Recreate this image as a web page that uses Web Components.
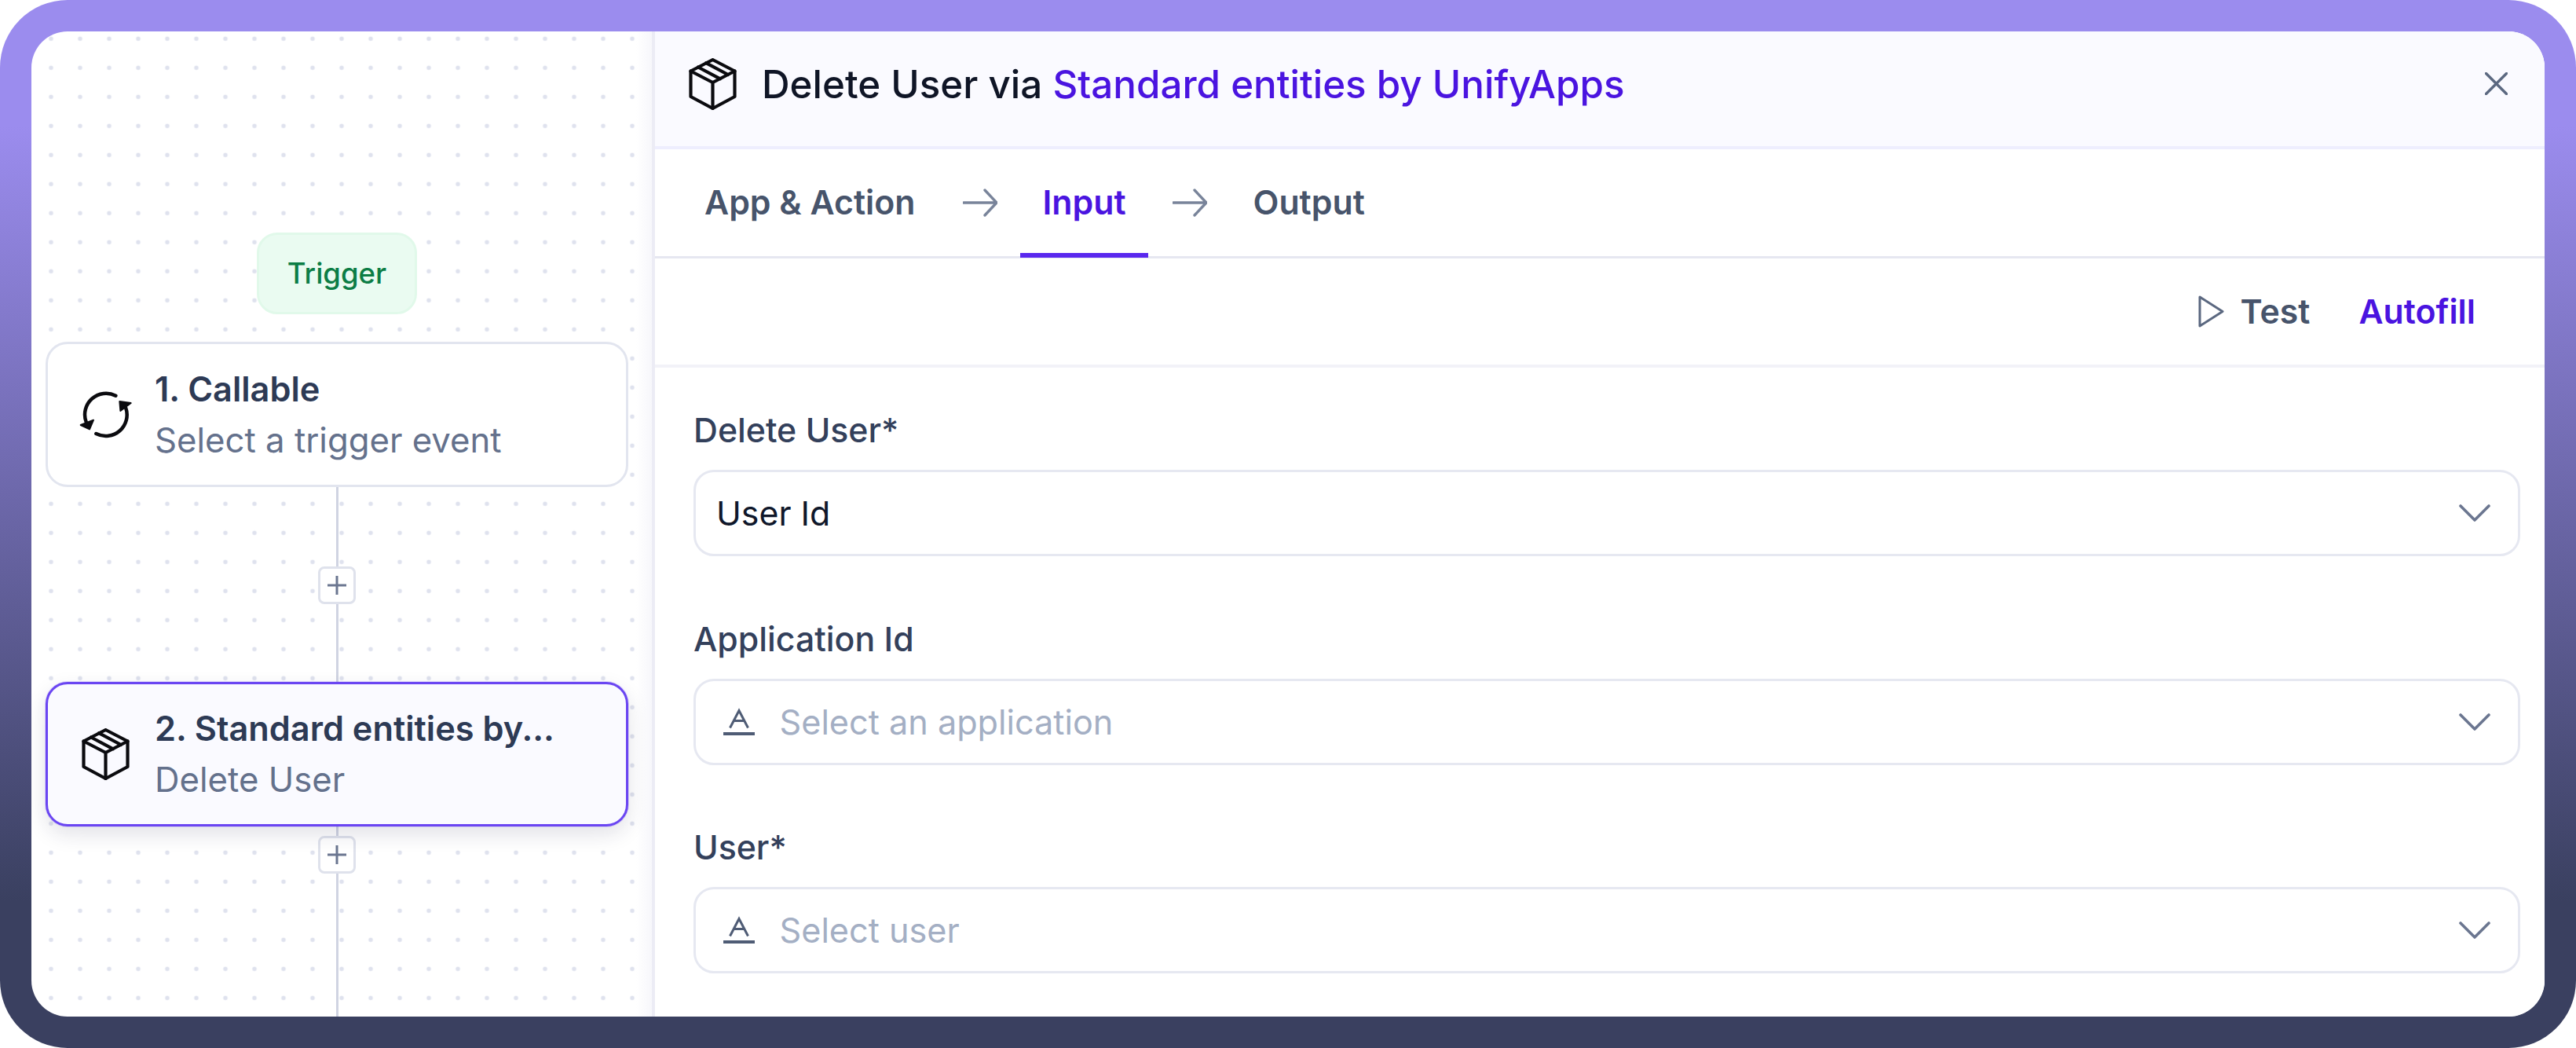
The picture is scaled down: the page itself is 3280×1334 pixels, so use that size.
<!doctype html>
<html lang="en"><head><meta charset="utf-8"><title>Delete User</title>
<style>html,body{margin:0;background:#fff}body{font-family:Inter,"Liberation Sans",sans-serif}</style>
</head><body>
<app-frame>
  <flow-canvas slot="left">
    <flow-pill>Trigger</flow-pill>
    <flow-card icon="refresh" top="1. Callable" sub="Select a trigger event"></flow-card>
    <flow-link before="101" after="99"></flow-link>
    <flow-card icon="box" active top="2. Standard entities by..." sub="Delete User"></flow-card>
    <flow-link before="12" fill></flow-link>
  </flow-canvas>
  <step-panel slot="right">
    <panel-header>Delete User via <b slot="link">Standard entities by UnifyApps</b></panel-header>
    <step-tabs></step-tabs>
    <action-bar></action-bar>
    <field-stack>
      <form-field label="Delete User*" value="User Id"></form-field>
      <form-field label="Application Id" placeholder="Select an application"></form-field>
      <form-field label="User*" placeholder="Select user"></form-field>
    </field-stack>
  </step-panel>
</app-frame>
<script>
const ICONS={
box:'<svg width="61" height="66" viewBox="0 0 61 66" fill="none" stroke="#0b0b0f" stroke-width="4.2" stroke-linejoin="round" stroke-linecap="round"><path d="M30.5 2 58.500 16.500v32.500L30.500 64 2.500 49V16.500z"/><path d="M2.500 16.500 30.500 31 58.500 16.500M30.500 31v33M22 6.200l28 14.800M12 11.500l28 14.800"/></svg>',
refresh:'<svg width="71.7" height="61.7" viewBox="120 170 215 185" fill="none" stroke="#0b0b0f" stroke-width="13.5" stroke-linecap="round"><path d="M265 190A81 81 0 0 0 152 290"/><path d="M190 335A81 81 0 0 0 303 235"/><path fill="#0b0b0f" stroke-width="6" stroke-linejoin="round" d="M131 302 180 283 165 318z"/><path fill="#0b0b0f" stroke-width="6" stroke-linejoin="round" d="M323 218 280 212 283 248z"/></svg>',
arrow:'<svg width="44" height="36" viewBox="0 0 44 36" fill="none" stroke="#79849a" stroke-width="3.4" stroke-linecap="round" stroke-linejoin="round"><path d="M1 18H42M28 2l15 16-15 16"/></svg>',
play:'<svg width="33" height="41" viewBox="0 0 33 41" fill="none" stroke="#5b6880" stroke-width="3" stroke-linejoin="round"><path d="M2 2 31 20.5 2 39z"/></svg>',
close:'<svg width="29" height="29" viewBox="0 0 29 29" fill="none" stroke="#5b6880" stroke-width="3.4" stroke-linecap="round"><path d="M1.500 1.500 27.500 27.500M27.500 1.500 1.500 27.500"/></svg>',
chevron:'<svg width="40" height="22" viewBox="0 0 40 22" fill="none" stroke="#6b7690" stroke-width="3.6" stroke-linecap="round" stroke-linejoin="round"><path d="M2 2 20 20 38 2"/></svg>',
text:'<svg width="40" height="36" viewBox="0 0 40 36" fill="none" stroke="#4f5c75" stroke-width="3"><path d="M8.500 25.500 20 3.500l11.500 22M13 16.500h14"/><path stroke-width="4" d="M0 33h40"/></svg>',
plus:'<svg width="24" height="24" viewBox="0 0 24 24" fill="none" stroke="#6b7690" stroke-width="3"><path d="M12 0v24M0 12h24"/></svg>'
};
function def(name,css,html){
  customElements.define(name,class extends HTMLElement{
    connectedCallback(){
      if(this.shadowRoot)return;
      const s=this.attachShadow({mode:'open'});
      s.innerHTML='<style>'+css+'</style>'+(typeof html==='function'?html(this):html);
    }
  });
}
def('app-frame',`
:host{display:block;box-sizing:border-box;width:3280px;height:1334px;padding:40px;border-radius:86px;background:linear-gradient(#9b8cee 12%,#3a4060 86%)}
.inner{display:flex;height:100%;border-radius:46px;overflow:hidden;background:#fff}
`,`<div class="inner"><slot name="left"></slot><slot name="right"></slot></div>`);
def('flow-canvas',`
:host{display:flex;flex-direction:column;align-items:center;box-sizing:border-box;width:794px;flex:none;height:1254px;padding:256px 31px 0 19px;border-right:4px solid #ececf5;
background:linear-gradient(90deg,rgba(248,248,251,0) 97.5%,#f7f7fb 100%),radial-gradient(circle at center,#dfe2ee 0 2.5px,transparent 3.2px) 6.500px -9.200px/37px 37px}
`,`<slot></slot>`);
def('flow-pill',`
:host{display:flex;align-items:center;justify-content:center;box-sizing:border-box;flex:none;width:204px;height:104px;margin-bottom:35px;border:3px solid #e1f9ea;border-radius:26px;background:#eafbf1;color:#0c7d45;font-size:36.500px;font-weight:500}
`,`<slot></slot>`);
def('flow-card',`
:host{display:flex;align-items:center;gap:32px;box-sizing:border-box;flex:none;width:742px;height:185px;padding-left:43px;border:3px solid #e2e5ef;border-radius:28px;background:#fff;position:relative;z-index:1}
:host([active]){height:184px;border-color:#6a45f2;background:#fafaff;box-shadow:0 0 0 1px rgba(106,69,242,.18),0 10px 26px rgba(30,30,70,.13)}
.i{display:flex;justify-content:center;align-items:center;width:61px;flex:none}
.i svg{flex:none}
.t{line-height:66px;white-space:nowrap}
.a{font-size:43.300px;font-weight:600;color:#2d3a55}.b{font-size:43.700px;font-weight:400;color:#64718c}
`,h=>`<div class="i">${ICONS[h.getAttribute('icon')]}</div><div class="t"><div class="a">${h.getAttribute('top')}</div><div class="b">${h.getAttribute('sub')}</div></div>`);
def('flow-link',`
:host{display:flex;flex-direction:column;align-items:center;flex:none}
:host([fill]){flex:1}
.l{width:3px;background:#d0d4e2;flex:none}
.f{flex:1}
.p{display:flex;align-items:center;justify-content:center;box-sizing:border-box;width:48px;height:48px;flex:none;border:3px solid #dfe2ec;border-radius:8px;background:#fff}
`,h=>{const a=h.getAttribute('after');return `<div class="l" style="height:${h.getAttribute('before')}px"></div><div class="p">${ICONS.plus}</div><div class="l ${a?'':'f'}" style="${a?`height:${a}px`:''}"></div>`});
def('step-panel',`:host{display:flex;flex-direction:column;flex:1;min-width:0;background:#fff}`,`<slot></slot>`);
def('panel-header',`
:host{display:flex;align-items:center;box-sizing:border-box;flex:none;height:150px;padding:0 47px 13px 43px;border-bottom:4px solid #eeeefe;background:#fafaff;color:#0f1526;font-size:49.300px;font-weight:500}
.t{margin-left:32px;white-space:pre}
.c{margin-left:auto;display:flex}
::slotted(b){font-weight:500;color:#4a14e0}
svg{display:block}
`,()=>`${ICONS.box}<div class="t"><slot></slot><slot name="link"></slot></div><div class="c">${ICONS.close}</div>`);
def('step-tabs',`
:host{display:flex;align-items:stretch;box-sizing:border-box;flex:none;height:139px;padding-left:35px;border-bottom:3px solid #e6e7f1;color:#47546b;font-size:42.800px;font-weight:600}
.tab{display:flex;align-items:center;padding:0 28px 2px;position:relative;white-space:nowrap}
.on{color:#4a14e0}
.on::after{content:"";position:absolute;left:0;right:0;bottom:-2px;height:6px;background:#5a28ee}
.ar{display:flex;align-items:center;margin:0 31px}
.ar.first{margin-left:33px;margin-right:29px}
`,()=>`<div class="tab">App &amp; Action</div><div class="ar first">${ICONS.arrow}</div><div class="tab on">Input</div><div class="ar">${ICONS.arrow}</div><div class="tab">Output</div>`);
def('action-bar',`
:host{display:flex;align-items:center;justify-content:flex-end;box-sizing:border-box;flex:none;height:139px;padding-right:88px;border-bottom:4px solid #f2f2f8;font-size:42.800px;font-weight:600;color:#47546b}
.t{margin-left:21px}
.f{margin-left:62px;color:#4a14e0}
svg{display:block}
`,()=>`${ICONS.play}<div class="t">Test</div><div class="f">Autofill</div>`);
def('field-stack',`:host{display:flex;flex-direction:column;gap:75.500px;padding:50px 31px 0 49px}`,`<slot></slot>`);
def('form-field',`
:host{display:flex;flex-direction:column;gap:20px;flex:none}
label{font-size:42.800px;line-height:60px;font-weight:500;color:#33405b}
.box{display:flex;align-items:center;box-sizing:border-box;height:110px;padding:0 35px 0 26px;border:3px solid #e6e8f1;border-radius:26px;background:#fff;font-size:42.800px}
.box.ph{padding-left:35px}
.v{color:#0f172a;font-weight:400}
.p{color:#a4afc4;margin-left:31.500px;font-size:43.200px}
.e{margin-left:auto;display:flex}
svg{display:block}
`,h=>{const p=h.getAttribute('placeholder');return `<label>${h.getAttribute('label')}</label><div class="box ${p?'ph':''}">${p?ICONS.text+`<span class="p">${p}</span>`:`<span class="v">${h.getAttribute('value')}</span>`}<div class="e">${ICONS.chevron}</div></div>`});
</script>
</body></html>
